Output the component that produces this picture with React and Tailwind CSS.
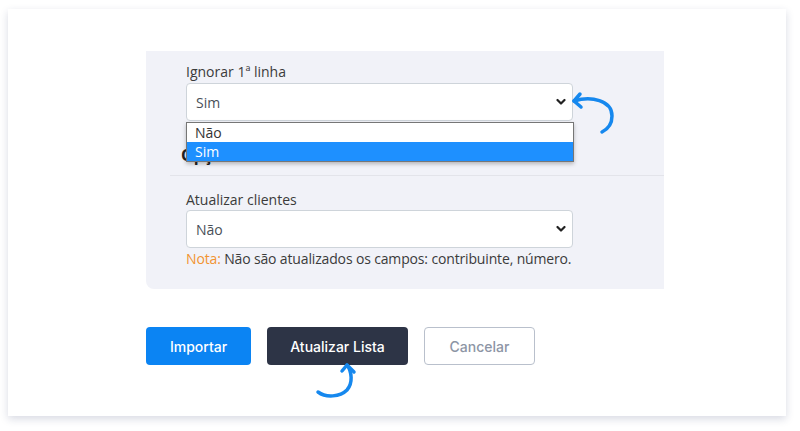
import React from 'react';

const Chevron = () => (
	<svg width="10" height="7" viewBox="0 0 10 7" className="absolute right-[6px] top-1/2 -translate-y-1/2">
		<path d="M1.5 1.5 L5 5 L8.5 1.5" fill="none" stroke="#222" strokeWidth="2.2" strokeLinecap="round" strokeLinejoin="round" />
	</svg>
);

const SelectBox = ({ value }) => (
	<div className="relative h-[38px] w-[387px] rounded border border-[#ced4da] bg-white pl-[9px] flex items-center text-[14px] text-[#495057]">
		{ value }
		<Chevron />
	</div>
);

const Arrows = () => (
	<svg width="800" height="431" className="absolute left-0 top-0 pointer-events-none" viewBox="0 0 800 431">
		<g fill="none" stroke="#1688ee" strokeWidth="3.5" strokeLinecap="round" strokeLinejoin="round">
			<path d="M574 101 C 591 96, 612 100, 612 116 C 612 124, 608 129, 602 132" />
			<path d="M580 94 L574 101 L581 107" />
			<path d="M347 365 C 352 372, 353 383, 347 390 C 340 397, 326 398, 318 392" />
			<path d="M342 371 L347 365 L354 372" />
		</g>
	</svg>
);

export default function App() {
	return (
		<div className="relative w-[800px] h-[431px] bg-white pl-[8px] pt-[9px]" style={{ fontFamily: '"Open Sans", sans-serif' }}>
			<div className="w-[778px] h-[407px] bg-white shadow-[0_3px_8px_rgba(40,50,100,0.18)] pl-[138px] pt-[42px]">
				<div className="w-[518px] bg-[#f1f2f8] rounded-bl-lg pt-[11px] pb-5">
					<div className="pl-10">
						<div className="h-5 mb-px text-[14px] leading-5 text-[#3b3b3b]">Ignorar 1ª linha</div>
						<div className="relative w-[387px]">
							<SelectBox value="Sim" />
							<div className="absolute left-0 top-full mt-px w-[388px] border border-[#767676] bg-white shadow-[0_2px_4px_rgba(0,0,0,0.25)] text-[14px] z-10">
								<div className="h-[19px] leading-[19px] pl-[8px] text-[#333]">Não</div>
								<div className="h-[19px] leading-[19px] pl-[8px] bg-[#1e90ff] text-white">Sim</div>
							</div>
						</div>
					</div>
					<div className="pl-[35px] mt-[22px] h-6 text-[16px] leading-6 font-bold text-[#222]">Opções</div>
					<div className="ml-6 mt-2 border-t border-[#e3e4ea]" />
					<div className="pl-10 pt-[14px]">
						<div className="h-5 text-[14px] leading-5 text-[#3b3b3b]">Atualizar clientes</div>
						<SelectBox value="Não" />
						<div className="mt-px h-5 text-[14px] leading-5 tracking-[-0.15px] text-[#3b3b3b]">
							<span className="font-medium text-[#f29431]">Nota:</span> Não são atualizados os campos: contribuinte, número.
						</div>
					</div>
				</div>
				<div className="mt-[38px] flex gap-4 text-[14px] font-medium" style={{ fontFamily: 'Inter, sans-serif' }}>
					<button className="h-[38px] w-[105px] rounded-sm bg-[#0b84f3] text-white">Importar</button>
					<button className="h-[38px] w-[141px] rounded-sm bg-[#2d3446] text-white">Atualizar Lista</button>
					<button className="h-[38px] w-[111px] rounded-sm border border-[#b9c0cc] bg-white text-[#8d95a5]">Cancelar</button>
				</div>
			</div>
			<Arrows />
		</div>
	);
}
